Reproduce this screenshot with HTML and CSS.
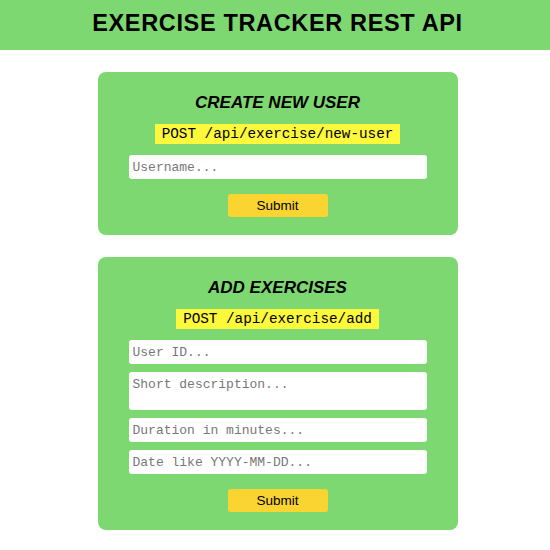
FILE: index.html
```html
<!DOCTYPE html>
<html lang="en">
<head>
<meta charset="utf-8">
<title>Exercise Tracker REST API</title>
<link rel="stylesheet" href="styles.css">
</head>
<body>
<header class="top">
  <h1 class="top-title">EXERCISE TRACKER REST API</h1>
</header>
<main class="page">
  <form class="card">
    <h2 class="card-title">CREATE NEW USER</h2>
    <code class="endpoint">POST /api/exercise/new-user</code>
    <input class="field field-first" type="text" placeholder="Username...">
    <button class="submit" type="button">Submit</button>
  </form>
  <form class="card">
    <h2 class="card-title">ADD EXERCISES</h2>
    <code class="endpoint">POST /api/exercise/add</code>
    <input class="field field-first" type="text" placeholder="User ID...">
    <textarea class="field field-area" placeholder="Short description..."></textarea>
    <input class="field" type="text" placeholder="Duration in minutes...">
    <input class="field" type="text" placeholder="Date like YYYY-MM-DD...">
    <button class="submit" type="button">Submit</button>
  </form>
</main>
</body>
</html>
```
FILE: styles.css
```css
html, body {
  margin: 0;
  padding: 0;
  background: #ffffff;
}

body {
  font-family: "Liberation Sans", Arial, sans-serif;
  color: #000;
}

.top {
  background: #7dd872;
  height: 50px;
  padding-left: 5px;
  box-sizing: border-box;
}

.top-title {
  margin: 0;
  height: 46px;
  line-height: 46px;
  text-align: center;
  font-size: 23.5px;
  font-weight: bold;
  letter-spacing: 0.65px;
}

.page {
  display: flex;
  flex-direction: column;
  align-items: center;
  gap: 22px;
  padding: 22px 0 0 5px;
}

.card {
  width: 360px;
  box-sizing: border-box;
  background: #7dd872;
  border-radius: 8px;
  padding: 21px 31px 18px;
  display: flex;
  flex-direction: column;
  align-items: center;
  margin: 0;
}

.card-title {
  margin: 0;
  font-size: 17px;
  line-height: 20px;
  font-weight: bold;
  font-style: italic;
  text-align: center;
}

.endpoint {
  margin-top: 11px;
  background: #fcf83b;
  font-family: "Liberation Mono", "Courier New", monospace;
  font-size: 14.3px;
  line-height: 16px;
  padding: 2px 7px;
  color: #000;
}

.field {
  display: block;
  width: 100%;
  box-sizing: border-box;
  height: 24px;
  margin: 8px 0 0;
  border: none;
  border-radius: 3px;
  background: #ffffff;
  padding: 0 4px;
  font-family: "Liberation Mono", "Courier New", monospace;
  font-size: 13px;
  color: #000;
  outline: none;
}

.field-first {
  margin-top: 11px;
}

.field-area {
  height: 38px;
  padding: 5px 4px;
  line-height: 15px;
  resize: none;
}

.field::placeholder {
  color: #777777;
}

.submit {
  margin-top: 15px;
  width: 100px;
  height: 23px;
  border: none;
  border-radius: 3px;
  background: #fad531;
  font-family: "Liberation Sans", Arial, sans-serif;
  font-size: 13.5px;
  color: #000;
  padding: 0;
}
```
